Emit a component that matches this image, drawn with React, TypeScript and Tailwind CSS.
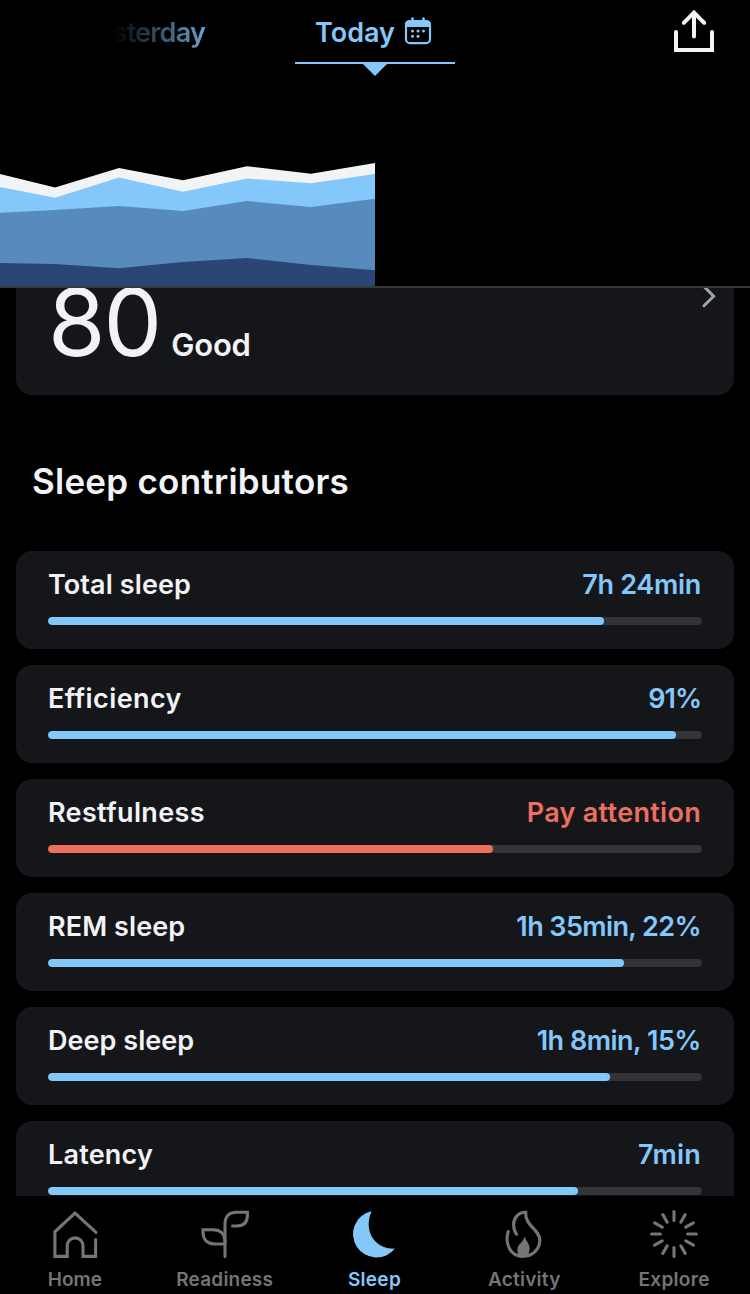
import type { ReactNode } from 'react';
import clsx from 'clsx';

// Types
interface Contributor {
  label: string;
  labelTracking: string;
  value: string;
  valueTracking: string;
  filled: number;
  attention?: boolean;
}

interface Tab {
  label: string;
  tracking: string;
  icon: ReactNode;
  active?: boolean;
}

const TRACK_WIDTH = 654;

const CONTRIBUTORS: Contributor[] = [
  { label: 'Total sleep', labelTracking: 'tracking-[0.1px]', value: '7h 24min', valueTracking: 'tracking-[-0.3px]', filled: 556 },
  { label: 'Efficiency', labelTracking: 'tracking-[0.4px]', value: '91%', valueTracking: 'tracking-[-1px]', filled: 628 },
  { label: 'Restfulness', labelTracking: 'tracking-[0.35px]', value: 'Pay attention', valueTracking: 'tracking-[0.3px]', filled: 445, attention: true },
  { label: 'REM sleep', labelTracking: 'tracking-[0.1px]', value: '1h 35min, 22%', valueTracking: 'tracking-[-0.6px]', filled: 575.5 },
  { label: 'Deep sleep', labelTracking: 'tracking-[0.05px]', value: '1h 8min, 15%', valueTracking: 'tracking-[-0.5px]', filled: 562 },
  { label: 'Latency', labelTracking: 'tracking-[0.2px]', value: '7min', valueTracking: 'tracking-[0.2px]', filled: 530 },
];

const RAYS = [0, 30, 60, 90, 120, 150, 180, 210, 240, 270, 300, 330];

function TabIcon({ children }: { children: ReactNode }) {
  return (
    <svg
      className="h-12 w-12"
      viewBox="0 0 48 48"
      fill="none"
      stroke="currentColor"
      strokeWidth="3.1"
      strokeLinecap="round"
      strokeLinejoin="miter"
    >
      {children}
    </svg>
  );
}

const TABS: Tab[] = [
  {
    label: 'Home',
    tracking: 'tracking-[0px]',
    icon: (
      <TabIcon>
        <path d="M45 22.4 24 3.2 3.9 21.8V46.4H16.2V35.8a7.9 7.9 0 0 1 15.8 0V46.4H44.6V29.6" />
      </TabIcon>
    ),
  },
  {
    label: 'Readiness',
    tracking: 'tracking-[0.2px]',
    icon: (
      <TabIcon>
        <path d="M24 46.4V14C24 6.5 28 2.2 35 2.2H46.4V5C46.4 12 43 16 36 16H31.6" />
        <path d="M24 34H14C6.500 34 2 29.500 2 22V19.800H12C19.500 19.800 24 24 24 31.500" />
      </TabIcon>
    ),
  },
  {
    label: 'Sleep',
    tracking: 'tracking-[0.3px]',
    active: true,
    icon: (
      <TabIcon>
        <path
          d="M21 1.200A23.500 23.500 0 1 0 45 38.600C29.200 39.300 18.700 28 18.700 14.500 18.700 9.500 19.700 5.500 21.400 1.900Z"
          fill="currentColor"
          stroke="none"
        />
      </TabIcon>
    ),
  },
  {
    label: 'Activity',
    tracking: 'tracking-[0.25px]',
    icon: (
      <TabIcon>
        <path d="M8.200 21.600C4.500 34 10.500 46.400 23 46.400 32.500 46.400 39.800 39 39.800 30.500 39.800 18.500 25 17 25.700 2.200 18.500 2 13.600 8 13.600 14.500 13.600 18 14.500 21.500 16.400 24.200" />
        <path
          d="M24.500 26.500C26 31 29.600 33.500 29.600 38.500 29.600 41.500 28.500 44.500 27.500 46.500H19C17.800 44.500 17.400 42 17.400 39.500 17.400 34 23.500 32.500 24.500 26.500Z"
          fill="currentColor"
          stroke="none"
        />
      </TabIcon>
    ),
  },
  {
    label: 'Explore',
    tracking: 'tracking-[0.3px]',
    icon: (
      <TabIcon>
        {RAYS.map((angle) => (
          <path key={angle} d="M24 1.600V10.400" transform={`rotate(${angle} 24 24)`} />
        ))}
      </TabIcon>
    ),
  },
];

function CalendarIcon() {
  return (
    <svg className="h-7 w-7" viewBox="0 0 28 28" fill="none">
      <rect x="2" y="4.200" width="24" height="22" rx="4" stroke="currentColor" strokeWidth="2.200" />
      <path d="M1 10V7.500a4 4 0 0 1 4-4h18a4 4 0 0 1 4 4V10Z" fill="currentColor" />
      <path d="M8.500 1.500V5M19.500 1.500V5" stroke="currentColor" strokeWidth="2.600" strokeLinecap="round" />
      <g fill="currentColor">
        <circle cx="8.500" cy="14" r="1.500" />
        <circle cx="14" cy="14" r="1.500" />
        <circle cx="19.500" cy="14" r="1.500" />
        <circle cx="8.500" cy="19.300" r="1.500" />
        <circle cx="14" cy="19.300" r="1.500" />
      </g>
    </svg>
  );
}

function TrendChart() {
  return (
    <svg className="block h-[210px] w-[750px]" viewBox="0 76 750 210">
      <path d="M0 174 55 187.500 119 168 183 180.300 247 166.200 311 173.700 375 163V286H0Z" fill="#f2f3f5" />
      <path d="M0 187 55 197.800 119 177.500 183 191.800 247 178.500 311 183.300 375 174V286H0Z" fill="#84c8fb" />
      <path d="M0 212.800 55 210 119 206 183 211 247 201 311 207 375 198.700V286H0Z" fill="#588bbd" />
      <path d="M0 263 55 264 119 268.300 183 262 247 258 311 265 375 270.300V286H0Z" fill="#2b4575" />
    </svg>
  );
}

function ContributorCard({ item }: { item: Contributor }) {
  return (
    <div className="h-[98px] shrink-0 rounded-2xl bg-[#15161a] px-8 pt-3.5">
      <div className="flex h-10 items-center justify-between pr-px text-[27px] font-semibold whitespace-nowrap">
        <span className={item.labelTracking}>{item.label}</span>
        <span className={clsx(item.valueTracking, item.attention ? 'text-[#ed6f5e]' : 'text-[#84c8fb]')}>
          {item.value}
        </span>
      </div>
      <div className="mt-3 h-2 overflow-hidden rounded-full bg-[#323438]">
        <div
          className={clsx('h-full rounded-full', item.attention ? 'bg-[#ed6f5e]' : 'bg-[#84c8fb]')}
          style={{ width: `${(item.filled / TRACK_WIDTH) * 100}%` }}
        />
      </div>
    </div>
  );
}

export default function App() {
  return (
    <div className="flex h-[1294px] w-[750px] flex-col overflow-hidden bg-black font-['Inter',sans-serif] text-[#f2f3f5]">
      {/* Day picker and trend */}
      <header className="h-[288px] shrink-0 border-b-2 border-[#36373b]">
        <div className="flex h-[76px] justify-between">
          <div className="flex h-[66px] w-[295px] justify-end pr-[90px]">
            <span className="bg-linear-to-r from-transparent from-26% to-[#6ba3ce] bg-clip-text text-[27px] leading-[66px] font-semibold tracking-[-0.8px] text-transparent">
              Yesterday
            </span>
          </div>
          <div className="flex w-40 flex-col items-center text-[#84c8fb]">
            <div className="flex h-16 w-full items-center justify-between border-b-2 border-[#84c8fb] pr-[23px] pl-5">
              <span className="pt-[5px] text-[27px] font-semibold">Today</span>
              <CalendarIcon />
            </div>
            <svg className="h-3 w-6" viewBox="0 0 24 12">
              <path d="M0 0H24L12 12Z" fill="currentColor" />
            </svg>
          </div>
          <div className="flex w-[295px] justify-end pt-[9px] pr-[35px]">
            <svg className="h-11 w-[42px]" viewBox="0 0 42 44" fill="none" stroke="currentColor" strokeWidth="4" strokeLinecap="round">
              <path d="M3 23V41H39V23" />
              <path d="M21 27.500V4M10.800 13.800 21 3.600 31.200 13.800" />
            </svg>
          </div>
        </div>
        <TrendChart />
      </header>

      {/* Scrolled content */}
      <main className="flex h-[908px] shrink-0 flex-col overflow-hidden px-4">
        <section className="flex h-[107px] shrink-0 justify-between overflow-hidden rounded-b-2xl bg-[#15161a] pr-[18px] pl-8">
          <div className="flex items-baseline">
            <span className="-mt-[23px] text-[93px] leading-[114px] tracking-[-2px]">80</span>
            <span className="ml-[11px] text-[31px] font-semibold tracking-[-0.2px]">Good</span>
          </div>
          <svg className="-mt-1 h-6 w-4" viewBox="0 0 16 24" fill="none">
            <path d="M4 2.500 13.600 12.300 4 21.800" stroke="#a0a2b0" strokeWidth="3" strokeLinecap="round" />
          </svg>
        </section>

        <h2 className="mt-[61px] h-[50px] shrink-0 pl-4 text-[35px] leading-[50px] font-semibold tracking-[0.25px] whitespace-nowrap">
          Sleep contributors
        </h2>

        <section className="mt-[45px] flex flex-col gap-4">
          {CONTRIBUTORS.map((item) => (
            <ContributorCard key={item.label} item={item} />
          ))}
        </section>
      </main>

      {/* Tab bar */}
      <nav className="grid h-[98px] shrink-0 grid-cols-5 bg-black pr-px">
        {TABS.map((tab) => (
          <div
            key={tab.label}
            className={clsx('flex flex-col items-center pt-3.5', tab.active ? 'text-[#84c8fb]' : 'text-[#757575]')}
          >
            {tab.icon}
            <span className={clsx('mt-2.5 text-[19px] leading-6 font-semibold', tab.tracking)}>{tab.label}</span>
          </div>
        ))}
      </nav>
    </div>
  );
}
